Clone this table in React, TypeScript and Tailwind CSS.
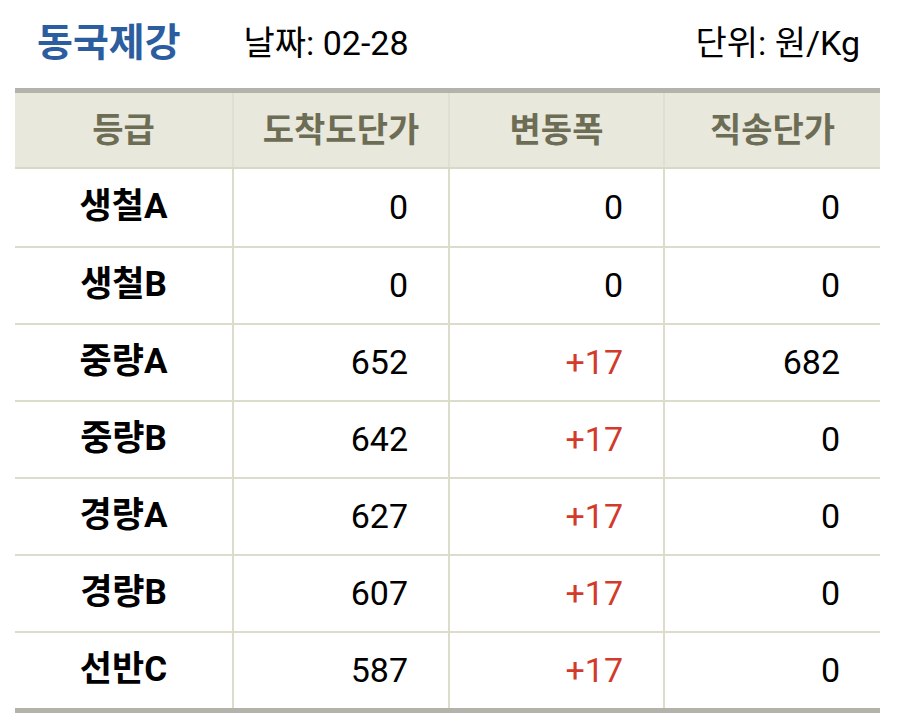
const rows = [
  { grade: '생철A', arrive: '0', diff: '0', direct: '0' },
  { grade: '생철B', arrive: '0', diff: '0', direct: '0' },
  { grade: '중량A', arrive: '652', diff: '+17', direct: '682' },
  { grade: '중량B', arrive: '642', diff: '+17', direct: '0' },
  { grade: '경량A', arrive: '627', diff: '+17', direct: '0' },
  { grade: '경량B', arrive: '607', diff: '+17', direct: '0' },
  { grade: '선반C', arrive: '587', diff: '+17', direct: '0' },
];

const headers = ['등급', '도착도단가', '변동폭', '직송단가'];

export default function App() {
  return (
    <div
      className="w-[899px] h-[727px] bg-white text-black overflow-hidden"
      style={{ fontFamily: "Roboto, 'Noto Sans CJK KR', sans-serif" }}
    >
      <div className="flex items-center h-[88px] pl-[37px] pr-[39px] pb-[2px]">
        <span className="text-[39px] font-bold text-[#2c5e9f]">동국제강</span>
        <span className="ml-[63px] text-[34px]">날짜: 02-28</span>
        <span className="ml-auto text-[34px]">단위: 원/Kg</span>
      </div>
      <div className="mx-[15px] w-[865px] border-t-[5px] border-b-[5px] border-[#b3b3ab]">
        <div className="grid grid-cols-[217px_216px_215px_217px] h-[76px] bg-[#e8e8dc] border-b-2 border-[#d8d8c6]">
          {headers.map((h, i) => (
            <div
              key={h}
              className={`flex items-center justify-center text-[34px] font-bold text-[#6d6d55] ${i > 0 ? 'border-l-2 border-[#e0e0d2]' : ''}`}
            >
              {h}
            </div>
          ))}
        </div>
        {rows.map((r, idx) => (
          <div
            key={r.grade}
            className={`grid grid-cols-[217px_216px_215px_217px] h-[77px] ${idx > 0 ? 'border-t-2 border-[#dcdccb]' : ''}`}
          >
            <div className="flex items-center justify-center text-[35px] font-bold">{r.grade}</div>
            <div className="flex items-center justify-end pr-[40px] text-[34px] border-l-2 border-[#dcdccb]">
              {r.arrive}
            </div>
            <div
              className={`flex items-center justify-end pr-[40px] text-[34px] border-l-2 border-[#dcdccb] ${r.diff.startsWith('+') ? 'text-[#d23a2c]' : ''}`}
            >
              {r.diff}
            </div>
            <div className="flex items-center justify-end pr-[40px] text-[34px] border-l-2 border-[#dcdccb]">
              {r.direct}
            </div>
          </div>
        ))}
      </div>
    </div>
  );
}
